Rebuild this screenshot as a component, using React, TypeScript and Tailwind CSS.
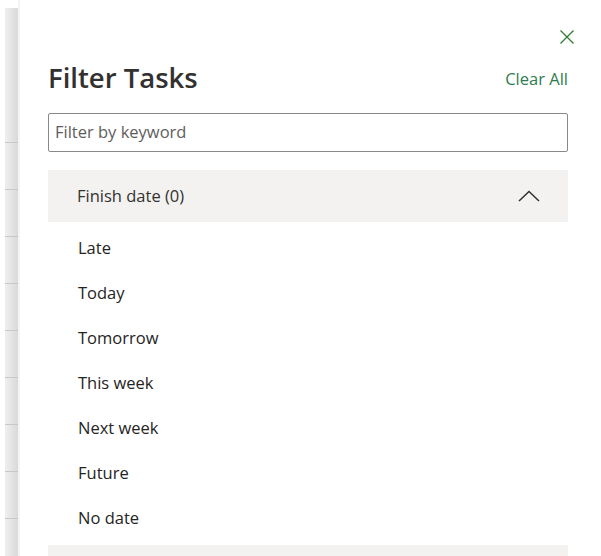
import React from "react";

const items = ["Late", "Today", "Tomorrow", "This week", "Next week", "Future", "No date"];

export default function App() {
  return (
    <div
      className="relative flex h-[556px] w-[601px] overflow-hidden bg-white"
      style={{ fontFamily: '"Open Sans", "Noto Sans", sans-serif' }}
    >
      {/* left background strip */}
      <div className="ml-[5px] mt-[8px] flex w-[13px] shrink-0 flex-col bg-gradient-to-r from-[#efefef] to-[#d9d9d9]">
        <div className="h-[134px] shrink-0" />
        {Array.from({ length: 9 }).map((_, i) => (
          <div key={i} className="h-[47px] shrink-0 border-t border-[#c8c8c8]" />
        ))}
      </div>
      <div className="w-[2px] shrink-0 bg-[#f4f4f4]" />
      {/* panel */}
      <div className="flex flex-1 flex-col pl-[28px] pr-[33px]">
        <div className="flex h-[30px] shrink-0 justify-end pt-[29px]">
          <button className="mr-[-7px] flex h-[16px] w-[16px] items-center justify-center">
            <svg width="16" height="16" viewBox="0 0 16 16">
              <path d="M1.5 1.5 L14.5 14.5 M14.5 1.5 L1.5 14.5" stroke="#2e7d32" strokeWidth="1.3" fill="none" />
            </svg>
          </button>
        </div>
        <div className="mt-[30px] flex shrink-0 items-end justify-between">
          <h1 className="text-[27.5px] font-semibold leading-[36px] text-[#323130]">Filter Tasks</h1>
          <span className="mb-[6px] text-[16.5px] leading-[22px] text-[#2e7d4f]">Clear All</span>
        </div>
        <div className="mt-[17px] flex h-[39px] shrink-0 items-center rounded-[2px] border border-[#8a8886] px-[6px]">
          <span className="text-[16.5px] text-[#605e5c]">Filter by keyword</span>
        </div>
        <div className="mt-[18px] flex h-[52px] shrink-0 items-center justify-between bg-[#f3f2f1] pl-[29px] pr-[28px]">
          <span className="text-[16.5px] text-[#323130]">Finish date (0)</span>
          <svg width="22" height="12" viewBox="0 0 22 12">
            <path d="M1 11 L11 1.5 L21 11" stroke="#323130" strokeWidth="1.5" fill="none" />
          </svg>
        </div>
        <div className="mt-[4px] flex shrink-0 flex-col">
          {items.map((t) => (
            <div key={t} className="flex h-[45px] shrink-0 items-center pl-[30px]">
              <span className="text-[16.5px] font-medium text-[#252423]">{t}</span>
            </div>
          ))}
        </div>
        <div className="mt-[4px] h-[20px] shrink-0 bg-[#f3f2f1]" />
      </div>
    </div>
  );
}
